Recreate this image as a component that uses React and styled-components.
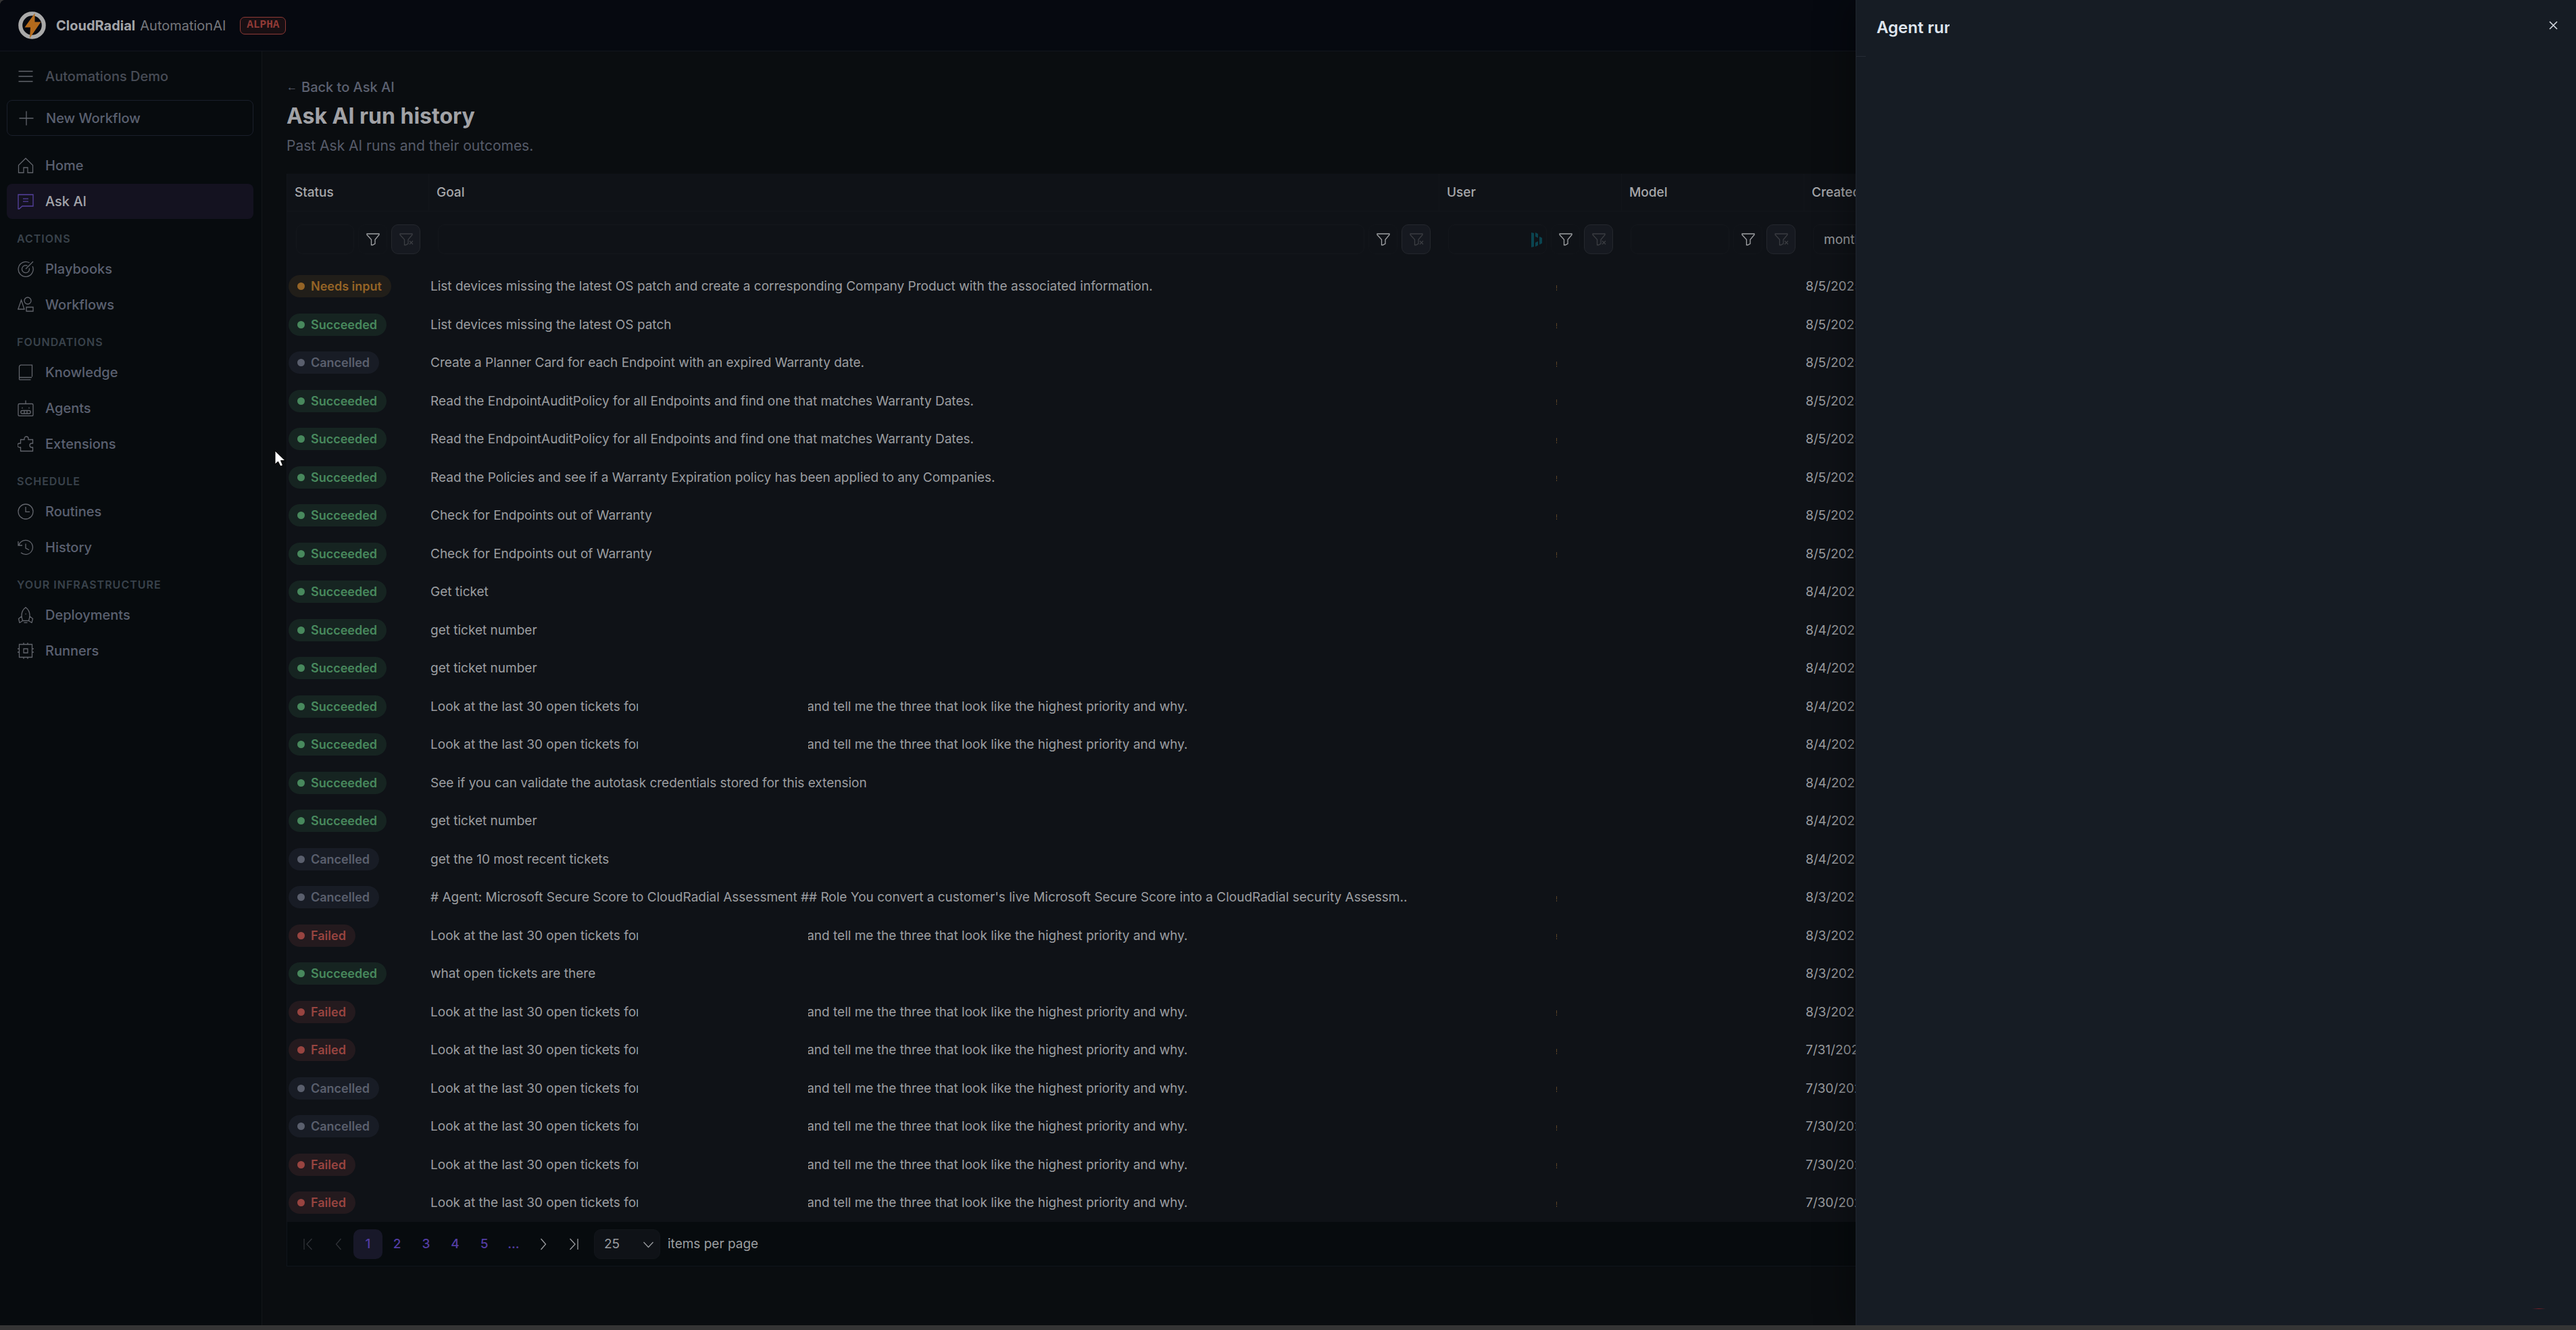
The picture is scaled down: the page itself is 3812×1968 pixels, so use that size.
import React from 'react';
import styled, {createGlobalStyle} from 'styled-components';

const GlobalStyle = createGlobalStyle`
  *, *::before, *::after {
    box-sizing: border-box;
  }
  body {
    margin: 0;
    background: #353535;
    font-family: Inter, "Liberation Sans", sans-serif;
    font-size: 19px;
    color: #9b9da0;
  }
  button, input, select {
    font: inherit;
    color: inherit;
    margin: 0;
  }
`;
const Page = styled.div`
  position: relative;
  display: flex;
  flex-direction: column;
  min-height: 100vh;
  overflow: hidden;
  background: #0a0d10;
  border-bottom: 7px solid #353535;
  border-top-left-radius: 8px;
`;
const Header = styled.header`
  display: flex;
  align-items: center;
  height: 76px;
  padding: 0 27px;
  background: #060910;
  border-bottom: 1px solid #12161e;
`;
const Brand = styled.div`
  display: flex;
  gap: 7px;
  margin: 0 21px 0 15px;
  font-size: 20px;
  color: #75777c;
  strong {
    color: #a3a5a9;
  }
`;
const Alpha = styled.span`
  height: 26px;
  padding: 0 9px;
  border: 1px solid #8f3a36;
  border-radius: 7px;
  background: #180f13;
  color: #8f3a36;
  font: bold 16px/23px "Liberation Mono", monospace;
`;
const Body = styled.div`
  display: flex;
  flex: 1;
`;
const Sidebar = styled.nav`
  width: 388px;
  flex-shrink: 0;
  padding: 11px 12px 0 10px;
  background: #070b0e;
  border-right: 1px solid #12161a;
`;
const NavLink = styled.a`
  display: flex;
  align-items: center;
  gap: 17px;
  height: 52px;
  margin-bottom: 1px;
  padding-left: 16px;
  border-radius: 8px;
  font-size: 20px;
  font-weight: 500;
  text-decoration: none;
  color: ${props => props.$active ? `#a3a4aa` : `#5a6070`};
  background: ${props => props.$active ? `#141220` : `none`};
  svg {
    color: ${props => props.$active ? `#56429e` : `#62656c`};
  }
`;
const MenuButton = styled(NavLink)`
  width: 100%;
  border: none;
  color: #474c56;
  margin-bottom: 9px;
`;
const NewButton = styled(NavLink)`
  width: 100%;
  height: 53px;
  border: 1px solid #1a1f2b;
  margin-bottom: 18px;
`;
const NavTitle = styled.h2`
  height: 47px;
  margin: 0;
  padding: 5px 0 0 15px;
  font-size: 16px;
  line-height: 47px;
  font-weight: 600;
  letter-spacing: 1px;
  color: #39424b;
`;
const Main = styled.main`
  flex: 1;
  min-width: 0;
  padding: 39px 36px 0;
`;
const BackLink = styled.a`
  display: flex;
  gap: 6px;
  font-size: 20px;
  line-height: 28px;
  font-weight: 500;
  text-decoration: none;
  color: #5c6170;
`;
const Arrow = styled.span`
  font-family: "Liberation Sans", Arial, sans-serif;
  font-size: 16px;
  font-weight: 400;
`;
const Title = styled.h1`
  margin: 9px 0 9px;
  font-size: 32px;
  line-height: 40px;
  font-weight: 700;
  color: #a1a2a6;
`;
const Subtitle = styled.p`
  margin: 0 0 26px;
  font-size: 21px;
  line-height: 30px;
  color: #565b69;
`;
const Grid = styled.table`
  width: 100%;
  table-layout: fixed;
  border-spacing: 0;
  background: #0f1217;
  border-left: 1px solid #12151b;
`;
const Col = styled.col`
  width: ${props => props.$width};
`;
const HeadCell = styled.th`
  height: 56px;
  padding: 0 11px;
  text-align: left;
  font-weight: 500;
  color: #a6a7aa;
  border-bottom: 1px solid #12151a;
  border-right: 1px solid #12151a;
`;
const FilterCell = styled.td`
  height: 82px;
  padding: 0 13px;
`;
const Filter = styled.div`
  display: flex;
  gap: 6px;
  position: relative;
`;
const FilterInput = styled.input`
  flex: 1;
  min-width: 0;
  height: 44px;
  padding: 0 15px;
  border: 1px solid #14171c;
  border-radius: 10px;
  background: none;
  outline: none;
  &::placeholder {
    color: #9b9da0;
    opacity: 1;
  }
`;
const FilterButton = styled.button`
  display: flex;
  align-items: center;
  justify-content: center;
  width: 43px;
  height: 44px;
  padding: 0;
  border-radius: 10px;
  border: 1px solid ${props => props.$clear ? `#24272d` : `#12151a`};
  background: ${props => props.$clear ? `#161920` : `none`};
  color: ${props => props.$clear ? `#3b3d42` : `#a0a2a5`};
`;
const AutofillMark = styled.svg`
  position: absolute;
  top: 11px;
  right: 104px;
`;
const Row = styled.tr`
  height: 57px;
  &:nth-child(even) {
    height: 56px;
  }
`;
const Cell = styled.td`
  padding: 0 12px 0 2px;
  white-space: nowrap;
`;
const tones = {
  'Needs input': ['#956426', '#211e19'],
  Succeeded: ['#48895d', '#162421'],
  Cancelled: ['#5a5f6d', '#181c25'],
  Failed: ['#984440', '#241a1e']
};
const Badge = styled.span`
  display: inline-flex;
  align-items: center;
  gap: 9px;
  height: 33px;
  padding: 0 14px 0 13px;
  border-radius: 17px;
  font-size: 18px;
  font-weight: 600;
  vertical-align: middle;
  color: ${props => tones[props.$status][0]};
  background: ${props => tones[props.$status][1]};
  &::before {
    content: "";
    width: 11px;
    height: 11px;
    border-radius: 50%;
    background: currentColor;
  }
`;
const Blank = styled.span`
  display: inline-block;
  position: relative;
  width: 252px;
  height: 20px;
  margin: 0 -2px 0 -4px;
  vertical-align: text-bottom;
  background: #0f1217;
`;
const Tick = styled.span`
  display: block;
  width: 1px;
  height: 8px;
  margin: 4px 0 0 171px;
  background: linear-gradient(#5a4326 5px, #0f1217 5px, #0f1217 6px, #5a4326 6px);
`;
const Pager = styled.div`
  display: flex;
  align-items: center;
  height: 66px;
  padding-left: 10px;
  background: #070b0e;
  border: 1px solid #10151c;
  border-top: none;
`;
const PageButton = styled.button`
  display: flex;
  align-items: center;
  justify-content: center;
  width: ${props => props.$wide ? `44px` : `43px`};
  height: 44px;
  padding: 0;
  border: none;
  border-radius: 10px;
  font-weight: 500;
  background: ${props => props.$current ? `#181829` : `none`};
  color: ${props => props.$color || `#533da3`};
`;
const SizePicker = styled.label`
  display: flex;
  align-items: center;
  gap: 11px;
  margin-left: 9px;
  position: relative;
  svg {
    position: absolute;
    left: 73px;
    top: 18px;
    pointer-events: none;
  }
`;
const Select = styled.select`
  appearance: none;
  width: 98px;
  height: 44px;
  padding: 0 14px;
  border: 1px solid #12161b;
  border-radius: 10px;
  background: #0f1217;
`;
const Drawer = styled.aside`
  position: absolute;
  top: 0;
  right: 0;
  bottom: 0;
  width: 1066px;
  padding: 23px 27px 0 30px;
  display: flex;
  justify-content: space-between;
  align-items: flex-start;
  background: #161c24;
  border-left: 1px solid #20262f;
  box-shadow: -8px 0 48px rgba(0, 0, 0, 0.4);
`;
const DrawerTitle = styled.h2`
  width: 108px;
  margin: 0;
  overflow: hidden;
  white-space: nowrap;
  font-size: 24px;
  line-height: 36px;
  font-weight: 600;
  color: #dfe5ee;
`;
const CloseButton = styled.button`
  display: flex;
  padding: 8px 0;
  border: none;
  background: none;
  color: #d5d9e0;
`;
const DrawerRule = styled.span`
  position: absolute;
  left: 0;
  top: 83px;
  width: 14px;
  height: 1px;
  background: #252b34;
`;
const RecorderDot = styled.span`
  position: absolute;
  right: 45px;
  bottom: 24px;
  width: 20px;
  height: 1px;
  background: linear-gradient(90deg, transparent, #7a1d27, transparent);
`;
const Pointer = styled.svg`
  position: absolute;
  left: 406px;
  top: 665px;
`;

const Icon = ({children, size = 24}) => (
    <svg width={size} height={size} viewBox="0 0 24 24" fill="none" stroke="currentColor" strokeWidth="1.3"
         aria-hidden="true">
        {children}
    </svg>
);
const icons = {
    menu: <path d="M1.5 4.5h21M1.5 12h21M1.5 19.5h21"/>,
    plus: <path d="M1.5 12h21M12 1.5v21"/>,
    home: <path d="M1.5 11.5V22.5h7.5v-7.5h6v7.5h7.5V11.5L12 1.2z"/>,
    ask: <path d="M1 2h22v17H7l-4.5 4H1zM8 8.2h8M8 12.2h8"/>,
    playbooks: <path d="M17.5 2.8A11 11 0 1 0 22.2 8M14.5 7.3a5.5 5.5 0 1 0 2.8 3.5M12 12L23 1"/>,
    workflows: <><path d="M5.5 5L10 18.5H.8zM13 15.5h10v6H13z"/><circle cx="15" cy="6" r="5"/></>,
    knowledge: <path d="M21.5 18.5V1.2H5a2.5 2.5 0 0 0-2.5 2.5V22.8M2.5 19.5h18.5M2.5 22.8h17"/>,
    agents: <><rect x="1" y="5.5" width="22" height="18" rx="1.8"/>
        <path d="M12 .5v5M7 10.8v1.8M17 10.8v1.8M7 15.5h10a2 2 0 0 1 0 4.5H7a2 2 0 0 1 0-4.5zM10 15.5v4.5M14 15.5v4.5"/></>,
    extensions: <path d="M4.5 5.5h5.5V4a3 3 0 0 1 6 0v1.5h6.500V11h-1.500a3 3 0 0 0 0 6h1.500v5.500h-18V17H3a3 3 0 0 1 0-6h1.500z"/>,
    routines: <><circle cx="12" cy="12" r="11"/><path d="M12 5v7.3h6"/></>,
    history: <path d="M2 8.5A10.5 10.5 0 1 1 5 19.8M1 3v6h6M12 6.5V13l5 2.8"/>,
    deployments: <path d="M7.5 20.5C4.5 12 6.5 5 12 .8c5.5 4.2 7.5 11.2 4.5 19.7zM6 14l-4.5 3.5 1.5 6 4.5-3M18 14l4.5 3.5-1.5 6-4.5-3M9.5 23.5h5M11.5 10.5h1.2"/>,
    runners: <path d="M2.5 2.5h19v19h-19zM9 9h6v6H9zM9 0v2.5M15 0v2.5M9 21.5V24M15 21.5V24M0 9h2.5M0 14h2.5M21.5 9H24M21.5 14H24"/>,
    first: <path d="M5 4v16M16.5 4L9 12l7.5 8"/>,
    prev: <path d="M15.5 4L8.5 12l7 8"/>,
    next: <path d="M8.5 4l7 8-7 8"/>,
    last: <path d="M19 4v16M7.5 4L15 12l-7.5 8"/>
};
const Funnel = ({clear}) => (
    <svg width="22" height="20" viewBox="0 0 22 20" fill="none" stroke="currentColor" strokeWidth="1.3"
         aria-hidden="true">
        <path d="M2 2h18v1.5l-6 7v6L10.5 18.5H8.5V10.5L2 3.5z"/>
        {clear && <path d="M16 12.5l5 5M21 12.5l-5 5"/>}
    </svg>
);

const nav = [
    {items: [['home', 'Home'], ['ask', 'Ask AI']]},
    {title: 'ACTIONS', items: [['playbooks', 'Playbooks'], ['workflows', 'Workflows']]},
    {title: 'FOUNDATIONS', items: [['knowledge', 'Knowledge'], ['agents', 'Agents'], ['extensions', 'Extensions']]},
    {title: 'SCHEDULE', items: [['routines', 'Routines'], ['history', 'History']]},
    {title: 'YOUR INFRASTRUCTURE', items: [['deployments', 'Deployments'], ['runners', 'Runners']]}
];
const audit = 'Read the EndpointAuditPolicy for all Endpoints and find one that matches Warranty Dates.';
const tickets = <>Look at the last 30 open tickets for<Blank/>and tell me the three that look like the highest priority and why.</>;
// status, goal, created, user set
const runs = [
    ['Needs input', 'List devices missing the latest OS patch and create a corresponding Company Product with the associated information.', '8/5/2025', true],
    ['Succeeded', 'List devices missing the latest OS patch', '8/5/2025', true],
    ['Cancelled', 'Create a Planner Card for each Endpoint with an expired Warranty date.', '8/5/2025', true],
    ['Succeeded', audit, '8/5/2025', true],
    ['Succeeded', audit, '8/5/2025', true],
    ['Succeeded', 'Read the Policies and see if a Warranty Expiration policy has been applied to any Companies.', '8/5/2025', true],
    ['Succeeded', 'Check for Endpoints out of Warranty', '8/5/2025', true],
    ['Succeeded', 'Check for Endpoints out of Warranty', '8/5/2025', true],
    ['Succeeded', 'Get ticket', '8/4/2025'],
    ['Succeeded', 'get ticket number', '8/4/2025'],
    ['Succeeded', 'get ticket number', '8/4/2025'],
    ['Succeeded', tickets, '8/4/2025'],
    ['Succeeded', tickets, '8/4/2025'],
    ['Succeeded', 'See if you can validate the autotask credentials stored for this extension', '8/4/2025'],
    ['Succeeded', 'get ticket number', '8/4/2025'],
    ['Cancelled', 'get the 10 most recent tickets', '8/4/2025'],
    ['Cancelled', '# Agent: Microsoft Secure Score to CloudRadial Assessment ## Role You convert a customer\'s live Microsoft Secure Score into a CloudRadial security Assessm..', '8/3/2025', true],
    ['Failed', tickets, '8/3/2025', true],
    ['Succeeded', 'what open tickets are there', '8/3/2025'],
    ['Failed', tickets, '8/3/2025', true],
    ['Failed', tickets, '7/31/2025', true],
    ['Cancelled', tickets, '7/30/2025', true],
    ['Cancelled', tickets, '7/30/2025', true],
    ['Failed', tickets, '7/30/2025', true],
    ['Failed', tickets, '7/30/2025', true]
];

const GridFilter = ({label, placeholder, autofill}) => (
    <FilterCell>
        <Filter>
            <FilterInput aria-label={`${label} filter`} placeholder={placeholder}/>
            {autofill && <AutofillMark width="18" height="24" viewBox="0 0 18 24" fill="#0a4450" aria-hidden="true">
                <path d="M1 1l4 1v20l-4 1zM7 1l4 2v6l-4-2zM13 7l4 2v8l-4 2zM7 16l4-2v6l-4 2z"/>
            </AutofillMark>}
            <FilterButton aria-label={`Filter ${label}`}><Funnel/></FilterButton>
            <FilterButton $clear aria-label={`Clear ${label}`}><Funnel clear/></FilterButton>
        </Filter>
    </FilterCell>
);

const App = () => {
    return (
        <>
            <GlobalStyle/>
            <Page>
                <Header>
                    <svg width="41" height="41" viewBox="0 0 41 41" aria-hidden="true">
                        <circle cx="20.5" cy="20.5" r="17.3" fill="none" stroke="#a9a9a9" strokeWidth="6"/>
                        <path d="M24.5 2.5L9.5 23.5h8.5L17 39.5 33.5 15.5h-9z" fill="#b46a1c"/>
                    </svg>
                    <Brand><strong>CloudRadial</strong><span>AutomationAI</span></Brand>
                    <Alpha>ALPHA</Alpha>
                </Header>
                <Body>
                    <Sidebar>
                        <MenuButton as="button"><Icon>{icons.menu}</Icon>Automations Demo</MenuButton>
                        <NewButton as="button"><Icon>{icons.plus}</Icon>New Workflow</NewButton>
                        {nav.map((group, i) => <div key={i}>
                            {group.title && <NavTitle>{group.title}</NavTitle>}
                            {group.items.map(([icon, label]) => (
                                <NavLink key={icon} href="#" $active={icon === 'ask'}>
                                    <Icon>{icons[icon]}</Icon>{label}
                                </NavLink>
                            ))}
                        </div>)}
                    </Sidebar>
                    <Main>
                        <BackLink href="#"><Arrow>←</Arrow>Back to Ask AI</BackLink>
                        <Title>Ask AI run history</Title>
                        <Subtitle>Past Ask AI runs and their outcomes.</Subtitle>
                        <Grid>
                            <colgroup>
                                <Col $width="210px"/>
                                <Col/>
                                <Col $width="270px"/>
                                <Col $width="270px"/>
                                <Col $width="1106px"/>
                            </colgroup>
                            <thead>
                                <tr>
                                    {['Status', 'Goal', 'User', 'Model', 'Created'].map(el => <HeadCell key={el}>{el}</HeadCell>)}
                                </tr>
                                <tr>
                                    <GridFilter label="Status"/>
                                    <GridFilter label="Goal"/>
                                    <GridFilter label="User" autofill/>
                                    <GridFilter label="Model"/>
                                    <GridFilter label="Created" placeholder="month/day/year"/>
                                </tr>
                            </thead>
                            <tbody>
                                {runs.map(([status, goal, created, user], i) => (
                                    <Row key={i}>
                                        <Cell><Badge $status={status}>{status}</Badge></Cell>
                                        <Cell>{goal}</Cell>
                                        <Cell>{user && <Tick/>}</Cell>
                                        <Cell/>
                                        <Cell>{created}</Cell>
                                    </Row>
                                ))}
                            </tbody>
                        </Grid>
                        <Pager>
                            <PageButton $wide $color="#303338" aria-label="First page"><Icon>{icons.first}</Icon></PageButton>
                            <PageButton $wide $color="#303338" aria-label="Previous page"><Icon>{icons.prev}</Icon></PageButton>
                            {[1, 2, 3, 4, 5].map(el => <PageButton key={el} $current={el === 1}>{el}</PageButton>)}
                            <PageButton $wide>...</PageButton>
                            <PageButton $wide $color="#9b9da0" aria-label="Next page"><Icon>{icons.next}</Icon></PageButton>
                            <PageButton $wide $color="#9b9da0" aria-label="Last page"><Icon>{icons.last}</Icon></PageButton>
                            <SizePicker>
                                <Select defaultValue="25">
                                    <option>25</option>
                                </Select>
                                <svg width="15" height="10" viewBox="0 0 15 10" fill="none" stroke="#9b9da0"
                                     strokeWidth="1.3" aria-hidden="true">
                                    <path d="M0.5 1l7 7.5 7-7.5"/>
                                </svg>
                                items per page
                            </SizePicker>
                        </Pager>
                    </Main>
                </Body>
                <Drawer aria-label="Agent run">
                    <DrawerTitle>Agent run</DrawerTitle>
                    <CloseButton aria-label="Close">
                        <svg width="13" height="13" viewBox="0 0 13 13" fill="none" stroke="currentColor"
                             strokeWidth="1.6" aria-hidden="true">
                            <path d="M1 1l11 11M12 1L1 12"/>
                        </svg>
                    </CloseButton>
                    <DrawerRule/>
                    <RecorderDot/>
                </Drawer>
                <Pointer width="18" height="27" viewBox="0 0 18 27" aria-hidden="true">
                    <path d="M1 2v20l4.5-4 3.5 7 3.5-1.5-3-7h6.5z" fill="#fff" stroke="#000"/>
                </Pointer>
            </Page>
        </>
    );
};

export default App;
